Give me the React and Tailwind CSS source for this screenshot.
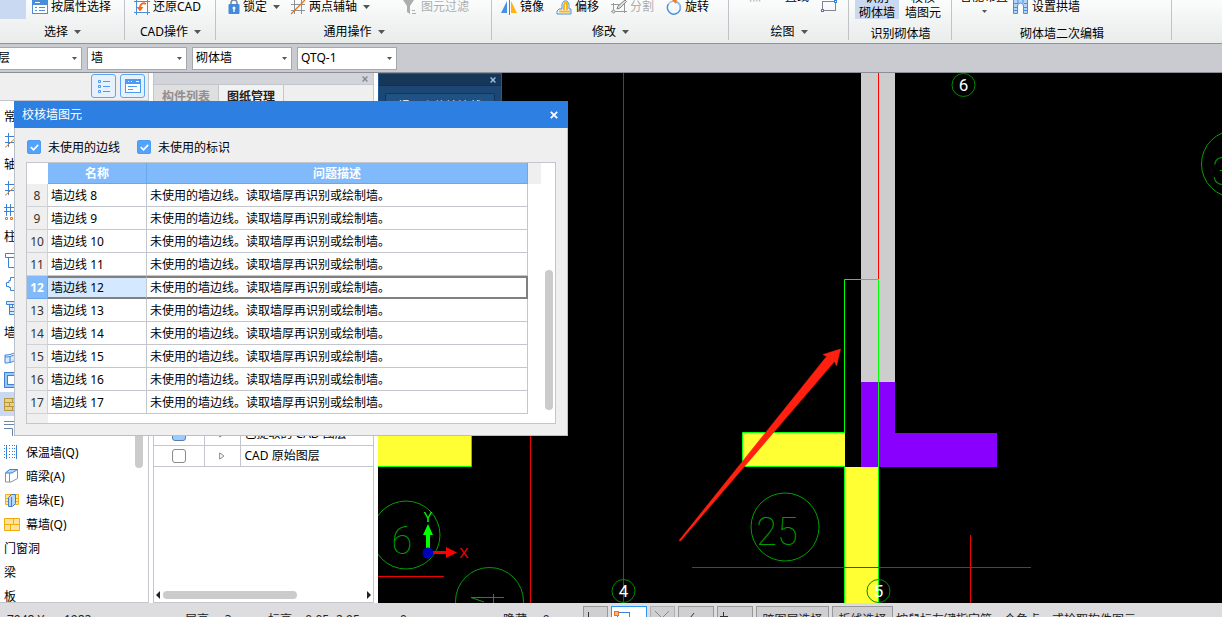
import React from "react";

const Caret = ({ className = "" }) => (
  <svg className={`shrink-0 ${className}`} width="7" height="4" viewBox="0 0 7 4" aria-hidden="true">
    <path d="M0 0h7L3.500 4z" fill="#555" />
  </svg>
);

const Cross = ({ color, size = 8, w = 1.8 }) => (
  <svg width={size} height={size} viewBox="0 0 8 8" aria-hidden="true">
    <path d="M.8.8l6.400 6.400M7.200.8L.8 7.200" stroke={color} strokeWidth={w} />
  </svg>
);

/* ---------- ribbon icons ---------- */
const Svg = ({ children, w = 16, h = 16 }) => (
  <svg className="shrink-0" width={w} height={h} viewBox={`0 0 ${w} ${h}`} fill="none" aria-hidden="true">
    {children}
  </svg>
);
const PropIcon = () => (
  <Svg>
    <rect x=".5" y=".5" width="15" height="14" fill="#fff" stroke="#4a8edb" />
    <rect x="1" y="0" width="14" height="6" fill="#4a8edb" />
    <path d="M3 3.500h5" stroke="#fff" />
    <path d="M3 8.500h2M3 11.500h2M7 8.500h6M7 11.500h6" stroke="#4a8edb" />
  </Svg>
);
const RestoreIcon = () => (
  <Svg>
    <path d="M2.500 0v16M13.500 0v16M0 2.500h16M0 13.500h16" stroke="#4a8edb" />
    <rect x="3" y="3" width="10" height="10" fill="#fff" />
    <path d="M12 5C9 3 6 5 6 9" stroke="#f26a1b" strokeWidth="2" />
    <path d="M2.500 8h7L6 12.500z" fill="#f26a1b" />
  </Svg>
);
const LockIcon = () => (
  <Svg w={12}>
    <path d="M3 6V4a3 3 0 016 0v2" stroke="#7d8794" strokeWidth="1.500" />
    <rect x=".5" y="5" width="11" height="10" rx="1" fill="#4289dc" />
    <circle cx="6" cy="9" r="1.500" fill="#fff" />
    <path d="M6 9v4" stroke="#fff" strokeWidth="1.400" />
  </Svg>
);
const AxisIcon = () => (
  <Svg>
    <path d="M4.500 1v14M11.500 1v14M1 5.500h14M1 11.500h14" stroke="#8b939c" />
    <path d="M1 15L15 1" stroke="#e8741e" strokeWidth="1.300" />
  </Svg>
);
const FilterIcon = () => (
  <Svg>
    <path d="M1 1h11L8 7v8l-3-2V7z" fill="#adadad" />
    <path d="M10 11.500h3M10 14.500h4" stroke="#adadad" />
  </Svg>
);
const MirrorIcon = () => (
  <Svg>
    <path d="M6 2v12H0z" fill="#4a90e2" />
    <path d="M10 2v12h6z" fill="#ffb414" />
    <path d="M8.500 0v16" stroke="#777" />
  </Svg>
);
const OffsetIcon = () => (
  <Svg>
    <path d="M1 15v-3l2-2h3V5l2-3h3l2 3v5h2v5z" stroke="#4a90e2" />
    <path d="M3 12.500h11M8 11V6l1-2h2v7" stroke="#ffb414" strokeWidth="2" />
  </Svg>
);
const SplitIcon = () => (
  <Svg>
    <path d="M2.500 4v10M13.500 4v10M0 5.500h10M0 12.500h16" stroke="#999" />
    <path d="M6 10l1-3 7-6 1.500 1.500L9 9z" fill="#ddd" stroke="#888" />
    <circle cx="2.500" cy="12.500" r="1.500" fill="#ddd" stroke="#999" />
  </Svg>
);
const RotateIcon = () => (
  <Svg>
    <path d="M10 2.500A6.500 6.500 0 112.500 5" stroke="#4a90e2" strokeWidth="1.500" />
    <path d="M2.500 5A6.500 6.500 0 0114 6.500v4" stroke="#9fc4ef" strokeWidth="1.300" />
    <path d="M5 0l6 0-1 5z" fill="#f47b20" />
  </Svg>
);
const RectIcon = () => (
  <Svg>
    <rect x="1.500" y="4.500" width="13" height="9" stroke="#7b8794" />
    <rect x=".5" y="12.500" width="2" height="2" fill="#fff" stroke="#3b82d6" />
    <rect x="13.500" y="3.500" width="2" height="2" fill="#fff" stroke="#3b82d6" />
  </Svg>
);
const ArchIcon = () => (
  <Svg>
    <path d="M.5 0h14v14.500h-4V7a3 3 0 00-6 0v7.500h-4z" fill="#b5d4f6" stroke="#4a90e2" />
    <path d="M1 4.500h4M1 8.500h3M11 4.500h3M11 8.500h3M1 11.500h3M11 11.500h3M5 1v3M10 1v3" stroke="#4a90e2" />
  </Svg>
);

const Tool = ({ icon, children, caret, muted, className = "" }) => (
  <button type="button" className={`flex h-6 shrink-0 items-center gap-[3px] whitespace-nowrap ${muted ? "text-[#adadad]" : "text-black"} ${className}`}>
    {icon}
    <span>{children}</span>
    {caret && <Caret className="ml-[3px]" />}
  </button>
);

const Group = ({ label, width, caret, rowClass = "", labelClass = "h-[22px]", children }) => (
  <section className={`relative flex shrink-0 flex-col justify-end ${width}`}>
    <div className={`flex shrink-0 ${rowClass}`}>{children}</div>
    <div className={`flex shrink-0 items-center justify-center gap-[6px] whitespace-nowrap ${labelClass}`}>
      <span>{label}</span>
      {caret && <Caret />}
    </div>
    <div className="absolute right-0 top-0 h-10 w-px bg-[#bfc2c6]" />
  </section>
);

const Ribbon = () => (
  <header className="flex h-11 shrink-0 overflow-hidden border-b border-[#8b9795] bg-gradient-to-b from-[#fbfcfc] to-[#e8eceb]">
    <Group label="选择" width="w-[125px]" caret rowClass="items-start gap-[6px] pb-[2px]">
      <div className="h-6 w-[26px] bg-[#cad9f2]" />
      <Tool icon={<PropIcon />}>按属性选择</Tool>
    </Group>
    <Group label="CAD操作" width="w-[91px]" caret rowClass="pb-[2px] pl-[9px]">
      <Tool icon={<RestoreIcon />}>还原CAD</Tool>
    </Group>
    <Group label="通用操作" width="w-[276px]" caret rowClass="pb-[2px] pl-3">
      <Tool icon={<LockIcon />} caret>锁定</Tool>
      <Tool icon={<AxisIcon />} caret className="ml-[10px]">两点辅轴</Tool>
      <Tool icon={<FilterIcon />} muted className="ml-8">图元过滤</Tool>
    </Group>
    <Group label="修改" width="w-[237px]" caret rowClass="gap-3 pb-[2px] pl-[9px]">
      <Tool icon={<MirrorIcon />}>镜像</Tool>
      <Tool icon={<OffsetIcon />}>偏移</Tool>
      <Tool icon={<SplitIcon />} muted>分割</Tool>
      <Tool icon={<RotateIcon />}>旋转</Tool>
    </Group>
    <Group label="绘图" width="w-[120px]" caret rowClass="items-end gap-3 pl-5">
      <Tool muted className="mb-3">点</Tool>
      <Tool className="mb-3 ml-3">直线</Tool>
      <button type="button" aria-label="矩形" className="mb-2"><RectIcon /></button>
    </Group>
    <Group label="识别砌体墙" width="w-[103px]" rowClass="gap-[6px] pb-[6px] pl-[6px] leading-3" labelClass="h-[18px]">
      <button type="button" className="flex w-11 flex-col items-center gap-[3px] bg-[#cad9f2]">
        <span>识别</span>
        <span>砌体墙</span>
      </button>
      <button type="button" className="flex flex-col items-center gap-[3px]">
        <span>校核</span>
        <span>墙图元</span>
      </button>
    </Group>
    <Group label="砌体墙二次编辑" width="w-[220px]" rowClass="items-end gap-[5px] pl-2" labelClass="h-[18px]">
      <button type="button" className="mb-3 flex flex-col items-center leading-3">
        <span>智能布置</span>
        <svg className="mt-[7px]" width="5" height="3" viewBox="0 0 5 3" aria-hidden="true">
          <path d="M0 0h5L2.500 3z" fill="#555" />
        </svg>
      </button>
      <Tool icon={<ArchIcon />} className="mb-[6px]">设置拱墙</Tool>
    </Group>
  </header>
);

const Combo = ({ label, value, className = "" }) => (
  <label className={`relative flex h-[23px] w-[100px] shrink-0 items-center border border-[#a5a8ad] bg-white ${className}`}>
    <select aria-label={label} defaultValue={value} className="h-full w-full appearance-none bg-transparent pl-[3px] outline-none">
      <option>{value}</option>
    </select>
    <svg className="pointer-events-none absolute right-1 top-[9px]" width="5" height="3" viewBox="0 0 5 3" aria-hidden="true">
      <path d="M0 0h5L2.500 3z" fill="#555" />
    </svg>
  </label>
);

/* ---------- component tree icons ---------- */
const blue = "#3b82d6";
const treeIcons = {
  axis: (
    <>
      <path d="M4.500 1v14M10.500 1v14M1 4.500h15M1 10.500h15" stroke={blue} />
      <path d="M1 15.500L14 4" stroke="#c9793a" />
    </>
  ),
  grid: (
    <>
      <path d="M2.500 0v12M6.500 0v12M10.500 0v12M0 3.500h16M0 7.500h16" stroke={blue} />
      <path d="M1.500 13.500h2v2h-2zM6.500 13.500h2v2h-2zM11.500 13.500h2v2h-2z" stroke="#e8741e" />
    </>
  ),
  column: <path d="M1.500 1.500h14v4h-14zM4.500 5.500v10h8v-10" stroke={blue} />,
  tie: <path d="M6.500 1.500h7v3h2v7h-2v3h-7v-3H5v-1H2.500v-4H5v-2h1.500z" stroke={blue} />,
  brickCol: <path d="M2.500 1.500h13v3h-13zM5.500 4.500v10h10M6 7.500h9M6 11.500h9M8.500 5v3M11.500 8v3" fill="#d8e9fb" stroke={blue} />,
  wall: <path d="M1 7c4 0 9-1 14-5v8c-5 4-10 5-14 5zM1 9c4 0 9-1 14-5M6 9v6" fill="#d8e9fb" stroke={blue} />,
  frame: (
    <>
      <rect x=".5" y=".5" width="15" height="15" fill="#9cc6f5" stroke={blue} />
      <rect x="3.500" y="3.500" width="9" height="9" fill="#fff" stroke={blue} />
    </>
  ),
  brick: <path d="M.5 2.500h14v12H.5zM0 6.500h15M0 10.500h15M8.500 3v3M5.500 7v3M8.500 11v3" fill="#e8d080" stroke="#b8983a" />,
  rebar: <path d="M0 1.500h16M0 4.500h16M0 8.500h8.500V16" stroke="#6b87a8" />,
  insulate: (
    <>
      <path d="M2.500 1v14M12.500 1v14" stroke={blue} />
      <path d="M.5 1v14M5.500 1v14M8.500 1v14M10.500 1v14" stroke={blue} strokeDasharray="1 2" />
    </>
  ),
  beam: (
    <>
      <path d="M1.500 5l5-3.500h7v9L7 14H1.500z" fill="#fff" stroke="#8b939c" />
      <path d="M1.500 5l4-3.500h8L8 5z" fill="#b8d7f8" stroke={blue} />
      <path d="M5.500 5v9" stroke="#8b939c" />
    </>
  ),
  pier: (
    <>
      <path d="M1.500 2.500h13v10h-13zM1 6.500h14M1 9.500h14" fill="#ffe49a" stroke="#f5ae1c" />
      <path d="M4.500 5.500l3-3h4v9l-3 3h-4zM7.500 5v9" fill="#b8d7f8" stroke={blue} />
    </>
  ),
  curtain: <path d="M.5 2.500h15v12H.5zM0 8.500h16M9.500 3v5M6.500 9v5" fill="#ffe49a" stroke="#f5a90f" />,
};

const tree = [
  { head: "常" },
  { icon: "axis", aria: "轴网" },
  { head: "轴" },
  { icon: "axis", aria: "轴网" },
  { icon: "grid", aria: "辅助轴线" },
  { head: "柱" },
  { icon: "column", aria: "柱" },
  { icon: "tie", aria: "构造柱" },
  { icon: "brickCol", aria: "砌体柱" },
  { head: "墙" },
  { icon: "wall", aria: "剪力墙" },
  { icon: "frame", aria: "人防门框墙" },
  { icon: "brick", aria: "砌体墙", active: true },
  { icon: "rebar", aria: "砌体加筋" },
  { icon: "insulate", text: "保温墙(Q)" },
  { icon: "beam", text: "暗梁(A)" },
  { icon: "pier", text: "墙垛(E)" },
  { icon: "curtain", text: "幕墙(Q)" },
  { head: "门窗洞" },
  { head: "梁" },
  { head: "板" },
];

const viewBtn = "flex h-6 w-[25px] items-center justify-center rounded-[3px] border border-[#5aa5f5] bg-[#e6f1fd]";

const Sidebar = () => (
  <aside className="flex w-[149px] shrink-0 flex-col border-b border-r border-[#c3c6cc] bg-white">
    <div className="flex h-7 shrink-0 justify-end gap-1 border-b border-[#c3c6cc] bg-[#efefef] pr-[3px] pt-px">
      <button type="button" aria-label="列表视图" className={viewBtn}>
        <Svg w={14} h={14}>
          <path d="M1.500 1.500h2v2h-2zM1.500 6.500h2v2h-2zM1.500 11.500h2v2h-2zM6 2.500h7M6 7.500h7M6 12.500h7" stroke="#4a9bf5" />
        </Svg>
      </button>
      <button type="button" aria-label="窗口视图" className={viewBtn}>
        <Svg w={16} h={14}>
          <rect x=".5" y=".5" width="15" height="13" fill="#fff" stroke="#4a9bf5" />
          <rect x="1" y="1" width="14" height="4" fill="#4a9bf5" />
          <path d="M3 2.500h1M6 2.500h1M11 2.500h3" stroke="#fff" />
          <path d="M3 7.500h9M3 10.500h5" stroke="#4a9bf5" />
        </Svg>
      </button>
    </div>
    <div className="flex min-h-0 flex-1 overflow-hidden">
      <ul className="min-w-0 flex-1 pt-[3px]">
        {tree.map((t, i) => (
          <li key={i} className={`flex h-6 items-center pl-1 ${t.active ? "bg-[#cad9f2]" : ""}`}>
            {t.head ? (
              <span className="pt-[2px]">{t.head}</span>
            ) : (
              <button type="button" aria-label={t.aria} className="flex items-center gap-[6px]">
                <Svg>{treeIcons[t.icon]}</Svg>
                {t.text && <span className="pt-[2px]">{t.text}</span>}
              </button>
            )}
          </li>
        ))}
      </ul>
      <div className="w-[13px] shrink-0">
        <div className="h-[367px] w-2 rounded-full bg-[#cbcbcb]" />
      </div>
    </div>
  </aside>
);

const layers = [
  { name: "已提取的 CAD 图层", on: true },
  { name: "CAD 原始图层", on: false },
];

const DrawingPanel = () => (
  <section className="flex w-[221px] shrink-0 flex-col border border-t-0 border-[#c3c6cc] bg-white">
    <div className="flex h-3 shrink-0 items-center justify-end border-b border-[#c3c6cc] bg-[#d3d4da] pr-[5px]">
      <button type="button" aria-label="关闭面板"><Cross color="#85888e" size={6} /></button>
    </div>
    <div className="flex h-6 shrink-0 bg-[#efefef] font-bold">
      <button type="button" className="w-[65px] border-r border-[#c3c6cc] bg-[#dfdfdf] text-[#8f8f8f]">构件列表</button>
      <button type="button" className="w-[65px] border-r border-[#c3c6cc] bg-[#f2f2f2] text-[#222]">图纸管理</button>
    </div>
    <div className="h-[315px] shrink-0" />
    <table className="w-full shrink-0 table-fixed border-collapse">
      <colgroup>
        <col className="w-[50px]" />
        <col className="w-9" />
        <col />
      </colgroup>
      <tbody>
        {layers.map((l) => (
          <tr key={l.name} className="h-[21px] border-b border-[#c3c6cc]">
            <td className="border-r border-[#c3c6cc] p-0">
              <label className="flex justify-center">
                <input type="checkbox" defaultChecked={l.on} aria-label={l.name} className="h-[14px] w-[14px] appearance-none rounded-[3px] border border-[#8a8a8a] bg-white checked:border-[#5b7ea8] checked:bg-[#9dcbff]" />
              </label>
            </td>
            <td className="border-r border-[#c3c6cc] p-0">
              <button type="button" aria-label="展开" className="flex w-full justify-center">
                <svg width="6" height="8" viewBox="0 0 6 8" aria-hidden="true">
                  <path d="M.7.900v6.200L5 4z" fill="none" stroke="#8a8a8a" />
                </svg>
              </button>
            </td>
            <td className="whitespace-nowrap p-0 pl-1 leading-5">{l.name}</td>
          </tr>
        ))}
      </tbody>
    </table>
    <div className="flex-1" />
    <div className="flex h-[14px] shrink-0 items-center gap-[3px] px-[2px]">
      <svg width="4" height="8" viewBox="0 0 4 8" aria-hidden="true"><path d="M4 0v8L0 4z" fill="#222" /></svg>
      <div className="h-2 w-[134px] rounded-full bg-[#cbcbcb]" />
      <div className="flex-1" />
      <svg width="4" height="8" viewBox="0 0 4 8" aria-hidden="true"><path d="M0 0v8l4-4z" fill="#222" /></svg>
    </div>
  </section>
);

const Mark = ({ x, y, n }) => (
  <g>
    <circle cx={x} cy={y} r="11.500" fill="none" stroke="#008a00" />
    <text x={x} y={y + 6} textAnchor="middle" fill="#fff" fontSize="17" className="font-['Roboto',sans-serif]">{n}</text>
  </g>
);

const Canvas = () => (
  <main className="relative min-w-0 flex-1 overflow-hidden bg-black">
    <svg className="absolute left-0 top-0 h-[530px] w-[844px]" viewBox="378 73 844 530" fill="none" aria-label="CAD">
      <path d="M623.500 73v530M530.500 430v173M378 576.500h66" stroke="#f00000" />
      <rect x="861" y="73" width="34" height="309" fill="#cdcdcd" />
      <path d="M878.500 73v206" stroke="#f00" />
      <path d="M861 382h34v51h102v34H861z" fill="#8a00ff" />
      <path d="M742.500 432.500H845v34H742.500z" fill="#ffff33" />
      <path d="M845 432.500H742.500v34H845" stroke="#0f0" />
      <path d="M844.500 467h34v136h-34z" fill="#ffff33" />
      <path d="M844.500 433V279.500h34V603M844.500 467v136" stroke="#0f0" />
      <path d="M378 430h93.500v36.500H378z" fill="#ffff33" />
      <path d="M378 466.500h93.500V430" stroke="#0f0" />
      <path d="M692 567.500h339M970.500 535v68" stroke="#f00000" />
      <g stroke="#00a000">
        <circle cx="785" cy="527" r="34" />
        <circle cx="406" cy="535" r="34" />
        <circle cx="489.500" cy="601.500" r="34" />
        <circle cx="1235" cy="164" r="33.500" />
        <path d="M484 602l-13-4.500h33M493.500 594v9" />
      </g>
      <g fill="#00a000" fontSize="38" fontWeight="100" className="font-['Roboto',sans-serif]">
        <text x="777" y="545" textAnchor="middle">25</text>
        <text x="402" y="554" textAnchor="middle">6</text>
        <text x="1212" y="185">3</text>
      </g>
      <Mark x={963.5} y={85} n="6" />
      <Mark x={623.5} y={591} n="4" />
      <Mark x={878.5} y={591} n="5" />
      <path d="M426 550v-15h-3l5-11 5 11h-3v15z" fill="#0f0" />
      <path d="M432 551h14v-4l11 5.500-11 5.500v-4h-14z" fill="#f00" />
      <circle cx="428" cy="553" r="5.500" fill="#0000b8" />
      <text x="428" y="522" textAnchor="middle" fill="#0f0" fontSize="15">Y</text>
      <text x="464" y="558" textAnchor="middle" fill="#f00" fontSize="15">X</text>
      <path d="M679 540.500L826.500 356.500 823 354.500 840.500 349 836.500 366 834.500 361.500 680.500 541z" fill="#ff2010" stroke="#ff2010" strokeWidth=".5" />
    </svg>
    <div className="absolute left-0 top-0 h-12 w-[124px] border border-[#1f5a94] bg-[#1c4673]">
      <div className="flex h-3 items-center justify-end border-b border-[#12304f] bg-[#173759] pr-[5px] pt-px">
        <button type="button" aria-label="关闭工具"><Cross color="#9cc3ea" size={6} /></button>
      </div>
      <div className="px-[6px] pt-[7px]">
        <button type="button" className="h-7 w-full rounded-[2px] border border-[#12355a] bg-[#1f5182] leading-[26px] text-white">提取砌体墙边线</button>
      </div>
    </div>
  </main>
);

const rows = [8, 9, 10, 11, 12, 13, 14, 15, 16, 17];

const Check = ({ children }) => (
  <label className="flex items-center gap-[7px]">
    <span className="relative flex h-[14px] w-[14px]">
      <input type="checkbox" defaultChecked className="h-[14px] w-[14px] appearance-none rounded-[2px] border border-[#4a9bf5] bg-white checked:bg-[#55a2fa]" />
      <svg className="pointer-events-none absolute left-[3px] top-1" width="9" height="7" viewBox="0 0 9 7" fill="none" aria-hidden="true">
        <path d="M.8 3l2.700 2.800L8.200.9" stroke="#fff" strokeWidth="1.700" />
      </svg>
    </span>
    <span className="pt-[2px]">{children}</span>
  </label>
);

const Dialog = () => (
  <div role="dialog" aria-label="校核墙图元" className="absolute left-[14px] top-[101px] w-[554px] bg-[#efefef]">
    <div className="flex h-[27px] items-center justify-between bg-[#2d7fe1] pl-2 pr-[10px] text-white">
      <span>校核墙图元</span>
      <button type="button" aria-label="关闭"><Cross color="#fff" /></button>
    </div>
    <div className="border border-t-0 border-[#b9c0ca] px-[11px] pb-[11px]">
      <div className="flex h-[34px] items-center gap-[17px] pl-px pt-1">
        <Check>未使用的边线</Check>
        <Check>未使用的标识</Check>
      </div>
      <div className="flex h-[262px] border border-[#c3c6cc] bg-white">
        <div className="flex flex-1 flex-col">
          <table className="w-full table-fixed border-separate border-spacing-0">
            <colgroup>
              <col className="w-[21px]" />
              <col className="w-[99px]" />
              <col />
            </colgroup>
            <thead>
              <tr className="h-[21px] bg-[#80bafa] font-bold text-white">
                <td className="bg-white p-0" />
                <th className="border-b border-r border-[#6aa8ee] p-0 pt-[2px]">名称</th>
                <th className="border-b border-r border-[#6aa8ee] p-0 pt-[2px]">问题描述</th>
              </tr>
            </thead>
            <tbody>
              {rows.map((n) => {
                const on = n === 12;
                return (
                  <tr key={n} className="h-[23px] leading-[19px]">
                    <th scope="row" className={`border-b border-r p-0 text-center ${on ? "border-[#6aa8ee] bg-[#80bafa] font-bold text-white" : "border-[#d0d2d6] bg-[#efefef] font-normal text-[#333]"}`}>{n}</th>
                    <td className={`whitespace-nowrap p-0 pl-[3px] ${on ? "border-y-2 border-r border-y-[#808080] border-r-[#c3c6cc] bg-[#d4e9ff]" : "border-b border-r border-[#c3c6cc]"}`}>墙边线 {n}</td>
                    <td className={`whitespace-nowrap p-0 pl-[3px] ${on ? "border-y-2 border-r-2 border-[#808080]" : "border-b border-r border-[#c3c6cc]"}`}>未使用的墙边线。读取墙厚再识别或绘制墙。</td>
                  </tr>
                );
              })}
            </tbody>
          </table>
          <div className="w-[21px] flex-1 bg-[#efefef]" />
        </div>
        <div className="w-[27px] shrink-0">
          <div className="h-[21px] w-[13px] bg-[#efefef]" />
          <div className="ml-[17px] mt-[86px] h-[140px] w-2 rounded-full bg-[#cbcbcb]" />
        </div>
      </div>
    </div>
  </div>
);

const snap = "h-7 shrink-0 border border-[#98989b] bg-[#cfcfd1] p-0";

const StatusBar = () => (
  <footer className="h-[14px] shrink-0 overflow-hidden bg-[#dddde0] text-[#222]">
    <div className="flex h-[34px] items-center whitespace-nowrap">
      <span className="w-[178px] shrink-0 pl-[7px]">7948 Y:&nbsp;&nbsp;&nbsp; -1982</span>
      <span className="w-[83px] shrink-0 pl-[7px]">层高:&nbsp;&nbsp;&nbsp; 3</span>
      <span className="w-[139px] shrink-0 pl-[7px]">标高:&nbsp; -0.05~2.95</span>
      <span className="w-[103px] shrink-0">0</span>
      <span className="w-20 shrink-0">隐藏:&nbsp;&nbsp;&nbsp; 0</span>
      <div className="flex gap-[3px]">
        <button type="button" aria-label="正交" className={`${snap} w-[25px]`}>
          <Svg w={20} h={22}><path d="M4.500 3v12h12" stroke="#333" /></Svg>
        </button>
        <button type="button" aria-label="对象捕捉" className="h-7 w-9 shrink-0 border border-[#2f93f5] bg-white p-0">
          <Svg w={30} h={22}>
            <rect x="5.500" y="3.500" width="12" height="14" stroke="#3b82d6" />
            <rect x="2.500" y="2.500" width="4" height="4" fill="#f8b98a" stroke="#e8741e" />
          </Svg>
        </button>
        <button type="button" aria-label="交点" className="h-7 w-[25px] shrink-0 border border-[#b0b0b2] bg-[#cfcfd1] p-0">
          <Svg w={22} h={22}><path d="M4 2l14 14M18 2L4 16" stroke="#888" /></Svg>
        </button>
        <button type="button" aria-label="垂点" className={`${snap} w-9`}>
          <Svg w={28} h={22}><path d="M5 10l3 3 7-9" stroke="#333" /></Svg>
        </button>
        <button type="button" aria-label="中点" className={`${snap} w-9`}>
          <Svg w={28} h={22}><path d="M2 7.500h8M5.500 3v10" stroke="#333" /></Svg>
        </button>
        <button type="button" className={`${snap} w-[73px]`}>跨图层选择</button>
        <button type="button" className={`${snap} w-[61px]`}>折线选择</button>
        <span className="self-center">按鼠标左键指定第一个角点，或拾取构件图元</span>
      </div>
    </div>
  </footer>
);

export default function App() {
  return (
    <div className="relative flex h-screen flex-col overflow-hidden bg-white text-[12px] leading-4 text-black font-['Noto_Sans','Noto_Sans_CJK_SC',sans-serif]">
      <Ribbon />
      <div className="flex h-[29px] shrink-0 items-center gap-[5px] border-b border-[#8b8f97] bg-[#c9cbd0]">
        <Combo label="楼层" value="首层" className="-ml-[18px]" />
        <Combo label="构件类型" value="墙" />
        <Combo label="构件" value="砌体墙" />
        <Combo label="名称" value="QTQ-1" />
      </div>
      <div className="flex min-h-0 flex-1 gap-1 overflow-hidden">
        <Sidebar />
        <DrawingPanel />
        <Canvas />
      </div>
      <StatusBar />
      <Dialog />
    </div>
  );
}
